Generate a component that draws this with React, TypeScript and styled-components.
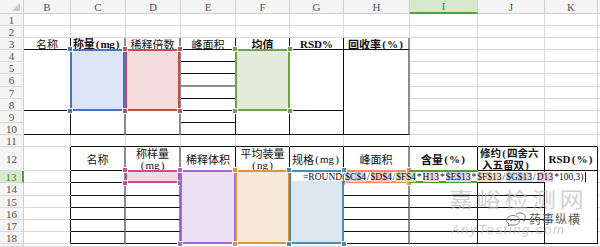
import React from 'react';
import styled, { createGlobalStyle } from 'styled-components';

const GlobalStyle = createGlobalStyle`
  html, body { margin: 0; padding: 0; background: #fff; }
  #root { width: 600px; height: 247px; overflow: hidden; }
`;

type Line = 'g' | 'k' | 'd';
const LINES: Record<Line, string> = {
  g: '1px solid #d9d9d9',
  k: '1px solid #111',
  d: '2px solid #8c8c8c',
};

type RangeKey = 'blue' | 'red' | 'green' | 'pink' | 'purple' | 'orange' | 'steel' | 'salmon' | 'active';
const RANGES: Record<RangeKey, { line: string; fill: string; handles: boolean }> = {
  blue: { line: '#4a72c6', fill: '#dde4f5', handles: true },
  red: { line: '#c4504e', fill: '#f5dcdc', handles: true },
  green: { line: '#72a04e', fill: '#e3ebdb', handles: true },
  pink: { line: '#c24f93', fill: '#f2d9e6', handles: true },
  purple: { line: '#9d6cc9', fill: '#eae1f3', handles: true },
  orange: { line: '#dc9440', fill: '#f7e9d9', handles: true },
  steel: { line: '#4b8db2', fill: '#dce6ee', handles: true },
  salmon: { line: '#f08c6e', fill: '#fde6df', handles: true },
  active: { line: '#4f9d34', fill: 'transparent', handles: false },
};

const Sheet = styled.div`
  position: relative;
  display: grid;
  grid-template-columns: 24px 47px 55px 55px 55px 54px 54px 66px 68px 67px 53px 1fr;
  grid-template-rows: 14px repeat(5, 12px) 13px repeat(5, 12px) 24px 12px 13px repeat(4, 12px) 1fr;
  width: 600px;
  height: 247px;
  overflow: hidden;
  background: #fff;
  font-family: "Noto Sans CJK SC", "Liberation Sans", sans-serif;
`;

const Corner = styled.div`
  grid-row: 1;
  grid-column: 1;
  display: flex;
  align-items: flex-end;
  justify-content: flex-end;
  padding: 0 3px 2px 0;
  box-sizing: border-box;
  background: #f4f4f4;
  border-right: 1px solid #d0d0d0;
  border-bottom: 1px solid #d0d0d0;
`;

const ColHead = styled.div<{ $c: number; $active?: boolean }>`
  grid-row: 1;
  grid-column: ${p => p.$c};
  box-sizing: border-box;
  display: flex;
  align-items: center;
  justify-content: center;
  background: ${p => (p.$active ? '#d6e9d0' : '#f4f4f4')};
  border-right: 1px solid #d0d0d0;
  border-bottom: ${p => (p.$active ? '2px solid #52a036' : '1px solid #d0d0d0')};
  color: ${p => (p.$active ? '#3c8c20' : '#555')};
  font: 11px/12px "Liberation Serif", serif;
`;

const RowHead = styled.div<{ $r: number; $active?: boolean }>`
  grid-column: 1;
  grid-row: ${p => p.$r};
  box-sizing: border-box;
  display: flex;
  align-items: center;
  justify-content: center;
  background: ${p => (p.$active ? '#d6e9d0' : '#f4f4f4')};
  border-right: ${p => (p.$active ? '2px solid #52a036' : '1px solid #d0d0d0')};
  border-bottom: 1px solid #d9d9d9;
  color: ${p => (p.$active ? '#3c8c20' : '#555')};
  font: 11px/12px "Liberation Serif", serif;
  overflow: hidden;
`;

const Cell = styled.div<{
  $r: number; $c: number; $rs: number; $cs: number;
  $bb: string; $br: string; $align: string; $bold: boolean;
}>`
  grid-row: ${p => p.$r} / span ${p => p.$rs};
  grid-column: ${p => p.$c} / span ${p => p.$cs};
  position: relative;
  box-sizing: border-box;
  min-width: 0;
  border-right: ${p => p.$br};
  border-bottom: ${p => p.$bb};
  display: flex;
  align-items: center;
  justify-content: ${p => p.$align};
  padding: 0 2px;
  font-size: 11px;
  line-height: 12px;
  font-weight: ${p => (p.$bold ? 700 : 400)};
  color: #111;
  white-space: nowrap;
`;

const TwoLine = styled.div<{ $left?: boolean; $size?: number }>`
  display: flex;
  flex-direction: column;
  align-items: ${p => (p.$left ? 'flex-start' : 'center')};
  font-size: ${p => p.$size ?? 11}px;
  line-height: 11px;
  padding-top: 1px;
`;

const Lat = styled.span`
  font-family: "Liberation Serif", serif;
`;

const Paren = styled.span`
  display: inline-block;
  width: 6px;
  text-align: center;
  font-family: "Liberation Serif", serif;
`;

const RangeBox = styled.div<{ $line: string; $fill: string }>`
  position: absolute;
  top: -1px;
  left: -1px;
  right: -1px;
  bottom: -1px;
  box-sizing: border-box;
  border: 2px solid ${p => p.$line};
  background: ${p => p.$fill};
  z-index: 2;
  pointer-events: none;
`;

const Handle = styled.span<{ $line: string; $v: 'top' | 'bottom'; $h: 'left' | 'right' }>`
  position: absolute;
  ${p => p.$v}: -5px;
  ${p => p.$h}: -5px;
  width: 4px;
  height: 4px;
  background: ${p => p.$line};
  border: 1px solid #fff;
`;

const Editor = styled.div`
  position: absolute;
  left: 292px;
  top: 172px;
  width: 305px;
  height: 9px;
  z-index: 5;
  background: #fff;
  box-sizing: border-box;
  padding-left: 11px;
  display: flex;
  align-items: center;
  font: 9.5px/10px "Liberation Serif", serif;
  color: #111;
  white-space: nowrap;
`;

const Ref = styled.span<{ $bg: string }>`
  background: ${p => p.$bg};
`;

const Op = styled.span`
  padding: 0 1px;
`;

const Caret = styled.span`
  display: inline-block;
  width: 1px;
  height: 10px;
  margin-left: 1px;
  background: #000;
`;

const WmTitle = styled.div`
  position: absolute;
  left: 449px;
  top: 186px;
  z-index: 6;
  font-size: 21px;
  line-height: 24px;
  letter-spacing: 3px;
  color: rgba(175, 175, 175, 0.6);
  transform: scaleX(1.15);
  transform-origin: left center;
  white-space: nowrap;
  pointer-events: none;
`;

const WmSite = styled.div`
  position: absolute;
  left: 451px;
  top: 223px;
  z-index: 6;
  font: italic 13px/14px "Liberation Sans", sans-serif;
  letter-spacing: 1.6px;
  color: rgba(180, 180, 180, 0.7);
  white-space: nowrap;
  pointer-events: none;
`;

const WmBrand = styled.div`
  position: absolute;
  left: 504px;
  top: 212px;
  z-index: 7;
  display: flex;
  align-items: center;
  gap: 3px;
  font-size: 12px;
  line-height: 14px;
  letter-spacing: 1px;
  color: #5a5a5a;
  white-space: nowrap;
  pointer-events: none;
`;

const Tight = styled.span`
  letter-spacing: -0.3px;
`;

type Spec = {
  at: string;
  rs?: number;
  cs?: number;
  text?: React.ReactNode;
  bb?: Line;
  br?: Line;
  align?: 'flex-start' | 'center';
  bold?: boolean;
  range?: RangeKey;
};

const P: React.FC<{ children: React.ReactNode }> = ({ children }) => (
  <>
    <Paren>(</Paren>
    <Lat>{children}</Lat>
    <Paren>)</Paren>
  </>
);

const S: Spec[] = [
  // table 1 header
  { at: 'B3', text: '名称', bb: 'k', br: 'k' },
  { at: 'C3', text: <Tight>称量<P>mg</P></Tight>, bb: 'k', br: 'd', align: 'flex-start', bold: true },
  { at: 'D3', text: '稀释倍数', bb: 'k', br: 'd' },
  { at: 'E3', text: '峰面积', bb: 'k', br: 'k' },
  { at: 'F3', text: '均值', bb: 'k', br: 'k', bold: true },
  { at: 'G3', text: <Lat>RSD%</Lat>, bb: 'k', br: 'k', bold: true },
  { at: 'H3', text: <>回收率<P>%</P></>, bb: 'k', br: 'd', bold: true },
  // table 1 body
  { at: 'B4', rs: 5, bb: 'k', br: 'k' },
  { at: 'C4', rs: 5, bb: 'k', br: 'd', range: 'blue' },
  { at: 'D4', rs: 5, bb: 'k', br: 'd', range: 'red' },
  { at: 'E4', bb: 'k', br: 'k' },
  { at: 'E5', bb: 'k', br: 'k' },
  { at: 'E6', bb: 'd', br: 'k' },
  { at: 'E7', bb: 'k', br: 'k' },
  { at: 'E8', bb: 'k', br: 'k' },
  { at: 'F4', rs: 5, bb: 'k', br: 'k', range: 'green' },
  { at: 'G4', rs: 5, bb: 'k', br: 'k' },
  { at: 'H4', rs: 7, bb: 'k', br: 'd' },
  { at: 'B9', rs: 2, bb: 'k', br: 'k' },
  { at: 'C9', rs: 2, bb: 'k', br: 'd' },
  { at: 'D9', rs: 2, bb: 'k', br: 'd' },
  { at: 'E9', bb: 'k', br: 'k' },
  { at: 'E10', bb: 'k', br: 'k' },
  { at: 'F9', rs: 2, bb: 'k', br: 'k' },
  { at: 'G9', rs: 2, bb: 'k', br: 'k' },
  // top of table 2
  ...'CDEFGHIJK'.split('').map(l => ({ at: `${l}11`, bb: 'k' as Line })),
  // table 2 header
  { at: 'B12', br: 'k' },
  { at: 'C12', text: '名称', bb: 'k', br: 'd' },
  { at: 'D12', text: <TwoLine><span>称样量</span><span><P>mg</P></span></TwoLine>, bb: 'k', br: 'd' },
  { at: 'E12', text: '稀释体积', bb: 'k', br: 'k' },
  { at: 'F12', text: <TwoLine><span>平均装量</span><span><P>ng</P></span></TwoLine>, bb: 'k', br: 'k' },
  { at: 'G12', text: <>规格<P>mg</P></>, bb: 'k', br: 'k', align: 'flex-start' },
  { at: 'H12', text: '峰面积', bb: 'k', br: 'd' },
  { at: 'I12', text: <>含量<P>%</P></>, bb: 'k', br: 'k', bold: true },
  {
    at: 'J12',
    text: (
      <TwoLine $left $size={10.5}>
        <span>修约<Paren>(</Paren>四舍六</span>
        <span>&thinsp;入五留双<Paren>)</Paren></span>
      </TwoLine>
    ),
    bb: 'k', br: 'k', align: 'flex-start', bold: true,
  },
  { at: 'K12', text: <><Lat>RSD</Lat><P>%</P></>, bb: 'k', br: 'k', bold: true },
  // table 2 body
  ...[13, 14, 15, 16, 17, 18].flatMap(r => [
    { at: `B${r}`, br: 'k' as Line },
    { at: `C${r}`, bb: 'k' as Line, br: 'd' as Line },
    { at: `D${r}`, bb: 'k' as Line, br: 'd' as Line, range: r === 13 ? ('pink' as RangeKey) : undefined },
    { at: `H${r}`, bb: 'k' as Line, br: 'd' as Line, range: r === 13 ? ('salmon' as RangeKey) : undefined },
    { at: `I${r}`, bb: 'k' as Line, br: 'k' as Line, range: r === 13 ? ('active' as RangeKey) : undefined },
    { at: `J${r}`, bb: 'k' as Line, br: 'k' as Line },
  ]),
  { at: 'E13', rs: 6, bb: 'k', br: 'k', range: 'purple' },
  { at: 'F13', rs: 6, bb: 'k', br: 'k', range: 'orange' },
  { at: 'G13', rs: 6, bb: 'k', br: 'k', range: 'steel' },
  { at: 'K13', rs: 6, bb: 'k', br: 'k' },
];

const parse = (a: string) => ({ c: a.charCodeAt(0) - 64, r: parseInt(a.slice(1), 10) });

type Placed = Spec & { c: number; r: number };

function buildCells(): Placed[] {
  const taken = new Set<string>();
  const out: Placed[] = [];
  for (const s of S) {
    const { c, r } = parse(s.at);
    const rs = s.rs ?? 1;
    const cs = s.cs ?? 1;
    for (let i = 0; i < rs; i++) for (let j = 0; j < cs; j++) taken.add(`${r + i}:${c + j}`);
    out.push({ ...s, c, r });
  }
  for (let r = 1; r <= 19; r++) {
    for (let c = 2; c <= 12; c++) {
      if (!taken.has(`${r}:${c}`)) out.push({ at: '', c, r });
    }
  }
  return out;
}

const CELLS = buildCells();

const RangeOverlay: React.FC<{ k: RangeKey }> = ({ k }) => {
  const { line, fill, handles } = RANGES[k];
  return (
    <RangeBox $line={line} $fill={fill}>
      {handles && (
        <>
          <Handle $line={line} $v="top" $h="left" />
          <Handle $line={line} $v="top" $h="right" />
          <Handle $line={line} $v="bottom" $h="left" />
          <Handle $line={line} $v="bottom" $h="right" />
        </>
      )}
    </RangeBox>
  );
};

const ChatIcon: React.FC = () => (
  <svg width="22" height="14" viewBox="0 0 22 14" fill="none" stroke="#7a7a7a" strokeWidth="1">
    <path d="M2.5 8.5c0-3 3-5 6.5-5s6.5 2 6.5 5-3 4.6-6.5 4.6c-.9 0-1.7-.1-2.4-.3L4.3 13.6l.6-2C3.4 10.8 2.5 9.7 2.5 8.5z" />
    <path d="M12 2.2c.9-.8 2.3-1.3 3.8-1.3 3 0 5.4 1.8 5.4 4.1 0 1-.5 1.9-1.3 2.6l.5 1.7-1.9-1" />
    <circle cx="7" cy="8.3" r=".6" fill="#7a7a7a" />
    <circle cx="11" cy="8.3" r=".6" fill="#7a7a7a" />
  </svg>
);

const COL_LETTERS = ['B', 'C', 'D', 'E', 'F', 'G', 'H', 'I', 'J', 'K', ''];

export default function App() {
  return (
    <>
      <GlobalStyle />
      <Sheet>
        <Corner>
          <svg width="8" height="8" viewBox="0 0 8 8">
            <polygon points="8,0 8,8 0,8" fill="#c8c8c8" />
          </svg>
        </Corner>
        {COL_LETTERS.map((l, i) => (
          <ColHead key={`h${i}`} $c={i + 2} $active={l === 'I'}>{l}</ColHead>
        ))}
        {Array.from({ length: 19 }, (_, i) => i + 1).map(n => (
          <RowHead key={`r${n}`} $r={n + 1} $active={n === 13}>{n < 19 ? n : ''}</RowHead>
        ))}
        {CELLS.map(cell => (
          <Cell
            key={`${cell.r}:${cell.c}`}
            $r={cell.r + 1}
            $c={cell.c}
            $rs={cell.rs ?? 1}
            $cs={cell.cs ?? 1}
            $bb={LINES[cell.bb ?? 'g']}
            $br={LINES[cell.br ?? 'g']}
            $align={cell.align ?? 'center'}
            $bold={!!cell.bold}
          >
            {cell.range && <RangeOverlay k={cell.range} />}
            {cell.text}
          </Cell>
        ))}
        <Editor>
          =ROUND(
          <Ref $bg="#c9d6f0">$C$4</Ref><Op>/</Op>
          <Ref $bg="#f1c9c8">$D$4</Ref><Op>/</Op>
          <Ref $bg="#d3e3c8">$F$4</Ref><Op>*</Op>
          <Ref $bg="#fbd6ca">H13</Ref><Op>*</Op>
          <Ref $bg="#e0d2f0">$E$13</Ref><Op>*</Op>
          <Ref $bg="#f7dfc2">$F$13</Ref><Op>/</Op>
          <Ref $bg="#cadced">$G$13</Ref><Op>/</Op>
          <Ref $bg="#f2cde0">D13</Ref>
          <Op>*100,3)</Op>
          <Caret />
        </Editor>
        <WmTitle>嘉峪检测网</WmTitle>
        <WmSite>AnyTesting.com</WmSite>
        <WmBrand>
          <ChatIcon />
          <span>药事纵横</span>
        </WmBrand>
      </Sheet>
    </>
  );
}
